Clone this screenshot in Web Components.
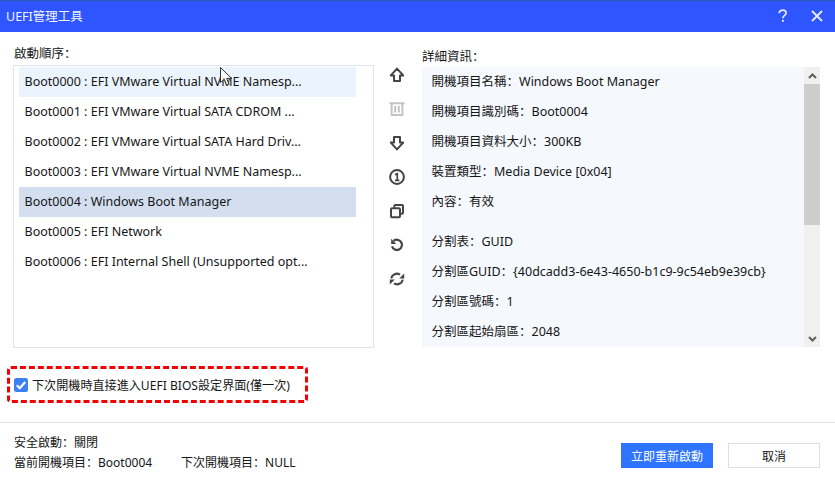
<!DOCTYPE html>
<html>
<head>
<meta charset="utf-8">
<title>UEFI管理工具</title>
<style>
	html, body { margin: 0; height: 100%; background: #fff; }
	body {
		font-family: "Noto Sans", "Noto Sans CJK SC", sans-serif;
		font-size: 12.5px;
		color: #161616;
	}
</style>
</head>
<body>
<uefi-dialog>
	<uefi-titlebar slot="title">UEFI管理工具</uefi-titlebar>
	<boot-list slot="list">
		<boot-item state="hover">Boot0000 : EFI VMware Virtual NVME Namesp...</boot-item>
		<boot-item>Boot0001 : EFI VMware Virtual SATA CDROM ...</boot-item>
		<boot-item>Boot0002 : EFI VMware Virtual SATA Hard Driv...</boot-item>
		<boot-item>Boot0003 : EFI VMware Virtual NVME Namesp...</boot-item>
		<boot-item state="selected">Boot0004 : Windows Boot Manager</boot-item>
		<boot-item>Boot0005 : EFI Network</boot-item>
		<boot-item>Boot0006 : EFI Internal Shell (Unsupported opt...</boot-item>
	</boot-list>
	<tool-rail slot="tools"></tool-rail>
	<detail-panel slot="details">
		<detail-row>開機項目名稱&#xFF1A;<span slot="value">Windows Boot Manager</span></detail-row>
		<detail-row>開機項目識別碼&#xFF1A;<span slot="value">Boot0004</span></detail-row>
		<detail-row>開機項目資料大小&#xFF1A;<span slot="value">300KB</span></detail-row>
		<detail-row>裝置類型&#xFF1A;<span slot="value">Media Device [0x04]</span></detail-row>
		<detail-row>內容&#xFF1A;<span slot="value">有效</span></detail-row>
		<detail-row gap>分割表&#xFF1A;<span slot="value">GUID</span></detail-row>
		<detail-row>分割區GUID&#xFF1A;<span slot="value">{40dcadd3-6e43-4650-b1c9-9c54eb9e39cb}</span></detail-row>
		<detail-row>分割區號碼&#xFF1A;<span slot="value">1</span></detail-row>
		<detail-row>分割區起始扇區&#xFF1A;<span slot="value">2048</span></detail-row>
	</detail-panel>
	<bios-check slot="check">下次開機時直接進入UEFI BIOS設定界面(僅一次)</bios-check>
	<uefi-status slot="status"></uefi-status>
</uefi-dialog>

<script>
const dialogTemplate = document.createElement('template')
dialogTemplate.innerHTML = `
	<style>
		:host {
			display: flex;
			flex-direction: column;
			position: relative;
			width: 835px;
			height: 483px;
			overflow: hidden;
		}

		#main {
			display: grid;
			grid-template-columns: 361px 48px 398px;
			padding: 13px 15px 0 13px;
		}

		.caption { height: 20px; line-height: 17px; padding-left: 1px; }
		#right .caption { height: 22px; line-height: 24px; padding-left: 0; }
		#main > section:first-child { display: flex; flex-direction: column; }
		#check { padding: 18px 0 0 7px; height: 56px; }

		#cursor { position: absolute; left: 220px; top: 67px; }
	</style>
	<slot name="title"></slot>
	<div id="main">
		<section>
			<div class="caption">啟動順序&#xFF1A;</div>
			<slot name="list"></slot>
		</section>
		<slot name="tools"></slot>
		<section id="right">
			<div class="caption">詳細資訊&#xFF1A;</div>
			<slot name="details"></slot>
		</section>
	</div>
	<div id="check"><slot name="check"></slot></div>
	<slot name="status"></slot>
	<svg id="cursor" width="14" height="20" viewBox="0 0 14 20">
		<path d="M.5.5v15l3.7-3.3 2.5 6 2.4-1-2.5-5.8h5z" fill="#fff" fill-opacity=".85" stroke="#333" stroke-width="1"/>
	</svg>
`
class UefiDialog extends HTMLElement {
	constructor () {
		super()
		this.attachShadow({ mode: 'open' })
		this.shadowRoot.appendChild(dialogTemplate.content.cloneNode(true))
	}
}

const titlebarTemplate = document.createElement('template')
titlebarTemplate.innerHTML = `
	<style>
		:host {
			display: flex;
			align-items: center;
			justify-content: space-between;
			box-sizing: border-box;
			height: 32px;
			padding: 0 12px 2px 6px;
			background: #2f55ff;
			border-top: 1px solid #2a5bb5;
			color: #f2f5ff;
			font-size: 12.5px;
		}
		#btns { display: flex; align-items: center; gap: 22px; padding-top: 1px; }
		svg { display: block; }
	</style>
	<slot></slot>
	<div id="btns">
		<svg width="12" height="14" viewBox="0 0 12 14" fill="none" stroke="#e6ebff" stroke-width="1.7">
			<path d="M2.2 4.2C2.2 2.3 3.8 1.2 5.7 1.2c2 0 3.4 1.1 3.4 2.8 0 2.4-3.2 2.4-3.2 5.2"/>
			<path d="M5.9 10.8v2.2"/>
		</svg>
		<svg width="12" height="12" viewBox="0 0 12 12" fill="none" stroke="#e6ebff" stroke-width="1.8">
			<path d="M1 1l10 10M11 1L1 11"/>
		</svg>
	</div>
`
class UefiTitlebar extends HTMLElement {
	constructor () {
		super()
		this.attachShadow({ mode: 'open' })
		this.shadowRoot.appendChild(titlebarTemplate.content.cloneNode(true))
	}
}

const listTemplate = document.createElement('template')
listTemplate.innerHTML = `
	<style>
		:host {
			display: flex;
			flex-direction: column;
			box-sizing: border-box;
			height: 283px;
			padding: 1px 17px 0 5px;
			border: 1px solid #dde3ef;
		}
	</style>
	<slot></slot>
`
class BootList extends HTMLElement {
	constructor () {
		super()
		this.attachShadow({ mode: 'open' })
		this.shadowRoot.appendChild(listTemplate.content.cloneNode(true))
	}
}

const itemTemplate = document.createElement('template')
itemTemplate.innerHTML = `
	<style>
		:host {
			display: block;
			height: 30px;
			line-height: 29px;
			padding-left: 5.5px;
			white-space: nowrap;
		}
		:host([state="hover"]) { background: #ebf3fd; }
		:host([state="selected"]) { background: #d3dfef; }
	</style>
	<slot></slot>
`
class BootItem extends HTMLElement {
	constructor () {
		super()
		this.attachShadow({ mode: 'open' })
		this.shadowRoot.appendChild(itemTemplate.content.cloneNode(true))
	}
}

const railTemplate = document.createElement('template')
railTemplate.innerHTML = `
	<style>
		:host {
			display: flex;
			flex-direction: column;
			align-items: center;
			padding-top: 13px;
			padding-right: 2px;
		}
		div { height: 34px; display: flex; align-items: center; justify-content: center; }
		svg { display: block; fill: none; stroke: #444; stroke-width: 2; }
	</style>
	<div><svg width="16" height="16" viewBox="0 0 16 16"><path d="M8 1.6L14.2 8.4H11V14H5V8.4H1.8Z" stroke-linejoin="round"/></svg></div>
	<div><svg width="16" height="16" viewBox="0 0 16 16" style="stroke:#c4c4c4"><path d="M.5 2.2H15.5M2.6 3v11H13.4V3M6.2 5v6.5M9.8 5v6.5"/></svg></div>
	<div><svg width="16" height="16" viewBox="0 0 16 16"><path d="M8 14.4L14.2 7.6H11V2H5V7.6H1.8Z" stroke-linejoin="round"/></svg></div>
	<div><svg width="16" height="16" viewBox="0 0 16 16"><circle cx="8" cy="8" r="6.9"/><path d="M6 5.6L8.3 4.7V11.2M5.9 11.3H10.4" stroke-width="1.7"/></svg></div>
	<div><svg width="16" height="16" viewBox="0 0 16 16"><rect x="2" y="5.3" width="9" height="9" rx="1"/><path d="M5.3 4.5V3a1 1 0 0 1 1-1H13a1 1 0 0 1 1 1V9.7a1 1 0 0 1-1 1h-1.2"/></svg></div>
	<div><svg width="16" height="16" viewBox="0 0 16 16"><path d="M4.6 3.9A5.1 5.1 0 1 1 3 9.4" stroke-width="2.2"/><path d="M2.2 1.8V7H7.2Z" fill="#444" stroke="none"/></svg></div>
	<div><svg width="16" height="16" viewBox="0 0 16 16"><path d="M2.2 7.4A5.8 5.8 0 0 1 11 3.6" stroke-width="2.2"/><path d="M13.8 8.6A5.8 5.8 0 0 1 5 12.4" stroke-width="2.2"/><path d="M15.2 2.4V7.4H10.2ZM.8 13.6V8.6H5.8Z" fill="#444" stroke="none"/></svg></div>
`
class ToolRail extends HTMLElement {
	constructor () {
		super()
		this.attachShadow({ mode: 'open' })
		this.shadowRoot.appendChild(railTemplate.content.cloneNode(true))
	}
}

const panelTemplate = document.createElement('template')
panelTemplate.innerHTML = `
	<style>
		:host {
			display: flex;
			height: 280px;
			background: #f5f8fd;
			overflow: hidden;
		}
		#rows { flex: 1; padding-left: 9.5px; }
		#bar {
			width: 16px;
			display: flex;
			flex-direction: column;
			background: #f0f0f0;
		}
		#bar div { height: 17px; display: flex; align-items: center; justify-content: center; }
		#bar i { display: block; height: 141px; background: #cdcdcd; }
		#bar span { flex: 1; }
		svg { display: block; fill: none; stroke: #606060; stroke-width: 2; }
	</style>
	<div id="rows"><slot></slot></div>
	<div id="bar">
		<div><svg width="9" height="6" viewBox="0 0 9 6"><path d="M1 5L4.5 1.5 8 5"/></svg></div>
		<i></i>
		<span></span>
		<div><svg width="9" height="6" viewBox="0 0 9 6"><path d="M1 1L4.5 4.5 8 1"/></svg></div>
	</div>
`
class DetailPanel extends HTMLElement {
	constructor () {
		super()
		this.attachShadow({ mode: 'open' })
		this.shadowRoot.appendChild(panelTemplate.content.cloneNode(true))
	}
}

const rowTemplate = document.createElement('template')
rowTemplate.innerHTML = `
	<style>
		:host {
			display: flex;
			height: 30px;
			line-height: 30px;
			white-space: nowrap;
		}
		:host([gap]) { margin-top: 10px; }
	</style>
	<slot></slot>
	<slot name="value"></slot>
`
class DetailRow extends HTMLElement {
	constructor () {
		super()
		this.attachShadow({ mode: 'open' })
		this.shadowRoot.appendChild(rowTemplate.content.cloneNode(true))
	}
}

const checkTemplate = document.createElement('template')
checkTemplate.innerHTML = `
	<style>
		:host {
			display: flex;
			align-items: center;
			gap: 4px;
			box-sizing: border-box;
			width: 301px;
			height: 37px;
			padding-left: 4px;
			border: 3px dashed #f30000;
			border-radius: 4px;
			white-space: nowrap;
			font-size: 12.1px;
		}
		svg { display: block; flex: none; }
	</style>
	<svg width="14" height="14" viewBox="0 0 14 14">
		<rect width="14" height="14" rx="2.5" fill="#3d7ff5"/>
		<path d="M2.8 7.2L5.8 10.2 11.2 4" fill="none" stroke="#fff" stroke-width="2.2"/>
	</svg>
	<slot></slot>
`
class BiosCheck extends HTMLElement {
	constructor () {
		super()
		this.attachShadow({ mode: 'open' })
		this.shadowRoot.appendChild(checkTemplate.content.cloneNode(true))
	}
}

const statusTemplate = document.createElement('template')
statusTemplate.innerHTML = `
	<style>
		:host {
			display: flex;
			justify-content: space-between;
			align-items: flex-end;
			flex: 1;
			padding: 9px 15px 15px 14px;
			border-top: 1px solid #e1e6f0;
			font-size: 12px;
		}
		#info { line-height: 20px; margin-bottom: -5px; }
		#info span + span { margin-left: 29px; }
		#btns { display: flex; gap: 15px; }
		button {
			width: 92px;
			height: 25px;
			padding: 0;
			box-sizing: border-box;
			font: inherit;
			border: 1px solid #d9dfeb;
			background: #fff;
			color: inherit;
		}
		button.primary { border: 0; background: #2e74ff; color: #fff; }
	</style>
	<div id="info">
		<div>安全啟動&#xFF1A;關閉</div>
		<div><span>當前開機項目&#xFF1A;Boot0004</span><span>下次開機項目&#xFF1A;NULL</span></div>
	</div>
	<div id="btns">
		<button class="primary">立即重新啟動</button>
		<button>取消</button>
	</div>
`
class UefiStatus extends HTMLElement {
	constructor () {
		super()
		this.attachShadow({ mode: 'open' })
		this.shadowRoot.appendChild(statusTemplate.content.cloneNode(true))
	}
}

window.customElements.define('uefi-dialog', UefiDialog)
window.customElements.define('uefi-titlebar', UefiTitlebar)
window.customElements.define('boot-list', BootList)
window.customElements.define('boot-item', BootItem)
window.customElements.define('tool-rail', ToolRail)
window.customElements.define('detail-panel', DetailPanel)
window.customElements.define('detail-row', DetailRow)
window.customElements.define('bios-check', BiosCheck)
window.customElements.define('uefi-status', UefiStatus)
</script>
</body>
</html>
